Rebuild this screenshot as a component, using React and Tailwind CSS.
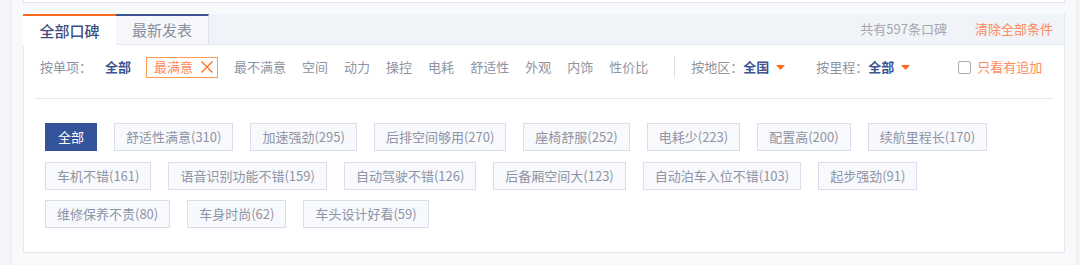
import React from "react";

const font = { fontFamily: '"Noto Sans CJK SC", "Liberation Sans", sans-serif' };

const items = ["最不满意", "空间", "动力", "操控", "电耗", "舒适性", "外观", "内饰", "性价比"];
const tags = [
  "舒适性满意(310)", "加速强劲(295)", "后排空间够用(270)", "座椅舒服(252)", "电耗少(223)", "配置高(200)", "续航里程长(170)",
  "车机不错(161)", "语音识别功能不错(159)", "自动驾驶不错(126)", "后备厢空间大(123)", "自动泊车入位不错(103)", "起步强劲(91)",
  "维修保养不贵(80)", "车身时尚(62)", "车头设计好看(59)",
];

function Caret() {
  return (
    <svg width="9" height="5" viewBox="0 0 9 5" className="ml-[7px]">
      <path d="M0 0 L9 0 L4.5 5 Z" fill="#ff6a1a" />
    </svg>
  );
}

export default function App() {
  return (
    <div className="w-[1080px] h-[265px] bg-[#f4f5f8] overflow-hidden" style={font}>
      <div className="ml-[11px] w-[1066px] h-[265px] bg-[#f8f9fb] border-l border-r border-[#e8ebf1] px-[11px]">
        <div className="h-[3px] bg-white border-l border-r border-b border-[#e3e6ee]" />
        <div className="mt-[11px] h-[239px] bg-white border-l border-r border-b border-[#e2e6ee]">
          {/* tab bar */}
          <div className="h-[31px] bg-[#f0f3f7] border-b border-[#e2e6ee] flex items-stretch">
            <div className="w-[93px] -ml-px bg-white border-t-2 border-[#ff6a1a] flex items-center justify-center text-[15px] text-[#3d4f80] font-medium h-[32px]">
              全部口碑
            </div>
            <div className="w-[93px] bg-[#f5f7fa] border-t-2 border-[#3b5591] border-r border-r-[#dde2ea] flex items-center justify-center text-[15px] text-[#8a8f9c]">
              最新发表
            </div>
            <div className="flex-1" />
            <div className="flex items-center text-[13px] text-[#a5a8b0] mr-[28px]">共有597条口碑</div>
            <div className="flex items-center text-[13px] text-[#ff8a5a] mr-[11px]">清除全部条件</div>
          </div>
          <div className="px-[11px]">
            {/* filter row */}
            <div className="mt-[11px] h-[22px] flex items-center text-[13px] pl-[5px]">
              <span className="text-[#8f94a2]">按单项：</span>
              <span className="ml-[13px] text-[#3b5591] font-bold">全部</span>
              <span className="ml-[15px] h-[21px] border border-[#ff9a55] flex items-center pl-[7px] pr-[3px] text-[#ff8a5a]">
                最满意
                <svg width="14" height="14" viewBox="0 0 14 14" className="ml-[7px]">
                  <path d="M1.5 1.5 L12.5 12.5 M12.5 1.5 L1.5 12.5" stroke="#ff7a2a" strokeWidth="1.5" />
                </svg>
              </span>
              {items.map((t) => (
                <span key={t} className="ml-[16px] text-[#8f94a2]">{t}</span>
              ))}
              <span className="ml-[26px] w-px h-[22px] bg-[#dfe2e8]" />
              <span className="ml-[16px] text-[#8f94a2]">按地区：</span>
              <span className="text-[#3b5591] font-bold">全国</span>
              <Caret />
              <span className="ml-[31px] text-[#8f94a2]">按里程：</span>
              <span className="text-[#3b5591] font-bold">全部</span>
              <Caret />
              <span className="ml-[48px] w-[13px] h-[13px] border border-[#a9acb3] rounded-[2px]" />
              <span className="ml-[6px] text-[#ff8a5a]">只看有追加</span>
            </div>
            <div className="mt-[20px] h-px bg-[#e3e6ec]" />
            {/* tags */}
            <div className="mt-[24px] pl-[10px] flex flex-wrap gap-x-[17px] gap-y-[10.5px] w-[960px]">
              <span className="h-[28px] px-[12px] flex items-center bg-[#34539a] border border-[#34539a] text-white text-[13px]">全部</span>
              {tags.map((t) => (
                <span key={t} className="h-[28px] px-[11px] flex items-center bg-[#f8f9fc] border border-[#d9deea] text-[#8f94a4] text-[13px]">{t}</span>
              ))}
            </div>
          </div>
        </div>
      </div>
    </div>
  );
}
